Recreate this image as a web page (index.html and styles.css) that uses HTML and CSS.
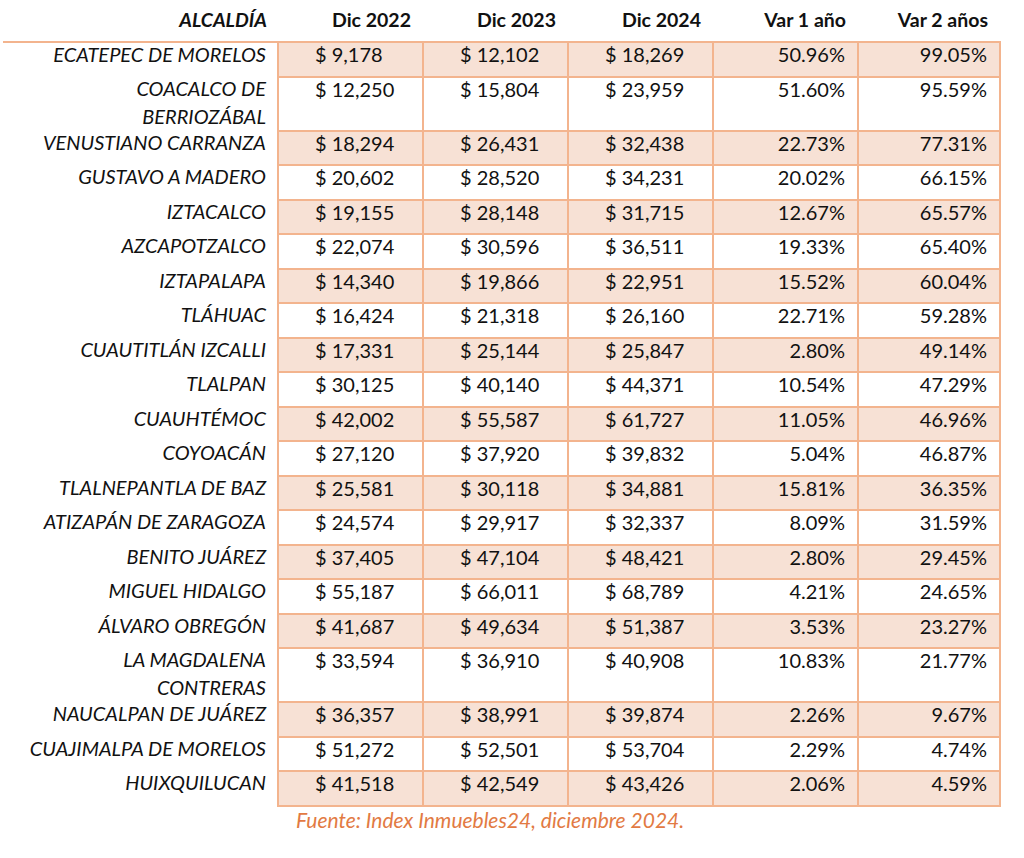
FILE: index.html
```html
<!DOCTYPE html>
<html lang="es">
<head>
<meta charset="utf-8">
<title>Precios por alcaldía</title>
<link rel="stylesheet" href="styles.css">
</head>
<body>
<div class="page">
<table class="data">
  <colgroup>
    <col class="c-name"><col class="c-num"><col class="c-num"><col class="c-num"><col class="c-num"><col class="c-last">
  </colgroup>
  <thead>
    <tr><th class="name">ALCALDÍA</th><th>Dic 2022</th><th>Dic 2023</th><th>Dic 2024</th><th>Var 1 año</th><th>Var 2 años</th></tr>
  </thead>
  <tbody>
    <tr class="shade"><td class="name">ECATEPEC DE MORELOS</td><td class="money">$ 9,178</td><td class="money">$ 12,102</td><td class="money">$ 18,269</td><td class="pct">50.96%</td><td class="pct">99.05%</td></tr>
    <tr class="tall"><td class="name">COACALCO DE<span class="line2">BERRIOZÁBAL</span></td><td class="money">$ 12,250</td><td class="money">$ 15,804</td><td class="money">$ 23,959</td><td class="pct">51.60%</td><td class="pct">95.59%</td></tr>
    <tr class="shade"><td class="name">VENUSTIANO CARRANZA</td><td class="money">$ 18,294</td><td class="money">$ 26,431</td><td class="money">$ 32,438</td><td class="pct">22.73%</td><td class="pct">77.31%</td></tr>
    <tr><td class="name">GUSTAVO A MADERO</td><td class="money">$ 20,602</td><td class="money">$ 28,520</td><td class="money">$ 34,231</td><td class="pct">20.02%</td><td class="pct">66.15%</td></tr>
    <tr class="shade"><td class="name">IZTACALCO</td><td class="money">$ 19,155</td><td class="money">$ 28,148</td><td class="money">$ 31,715</td><td class="pct">12.67%</td><td class="pct">65.57%</td></tr>
    <tr><td class="name">AZCAPOTZALCO</td><td class="money">$ 22,074</td><td class="money">$ 30,596</td><td class="money">$ 36,511</td><td class="pct">19.33%</td><td class="pct">65.40%</td></tr>
    <tr class="shade"><td class="name">IZTAPALAPA</td><td class="money">$ 14,340</td><td class="money">$ 19,866</td><td class="money">$ 22,951</td><td class="pct">15.52%</td><td class="pct">60.04%</td></tr>
    <tr><td class="name">TLÁHUAC</td><td class="money">$ 16,424</td><td class="money">$ 21,318</td><td class="money">$ 26,160</td><td class="pct">22.71%</td><td class="pct">59.28%</td></tr>
    <tr class="shade"><td class="name">CUAUTITLÁN IZCALLI</td><td class="money">$ 17,331</td><td class="money">$ 25,144</td><td class="money">$ 25,847</td><td class="pct">2.80%</td><td class="pct">49.14%</td></tr>
    <tr><td class="name">TLALPAN</td><td class="money">$ 30,125</td><td class="money">$ 40,140</td><td class="money">$ 44,371</td><td class="pct">10.54%</td><td class="pct">47.29%</td></tr>
    <tr class="shade"><td class="name">CUAUHTÉMOC</td><td class="money">$ 42,002</td><td class="money">$ 55,587</td><td class="money">$ 61,727</td><td class="pct">11.05%</td><td class="pct">46.96%</td></tr>
    <tr><td class="name">COYOACÁN</td><td class="money">$ 27,120</td><td class="money">$ 37,920</td><td class="money">$ 39,832</td><td class="pct">5.04%</td><td class="pct">46.87%</td></tr>
    <tr class="shade"><td class="name">TLALNEPANTLA DE BAZ</td><td class="money">$ 25,581</td><td class="money">$ 30,118</td><td class="money">$ 34,881</td><td class="pct">15.81%</td><td class="pct">36.35%</td></tr>
    <tr><td class="name">ATIZAPÁN DE ZARAGOZA</td><td class="money">$ 24,574</td><td class="money">$ 29,917</td><td class="money">$ 32,337</td><td class="pct">8.09%</td><td class="pct">31.59%</td></tr>
    <tr class="shade"><td class="name">BENITO JUÁREZ</td><td class="money">$ 37,405</td><td class="money">$ 47,104</td><td class="money">$ 48,421</td><td class="pct">2.80%</td><td class="pct">29.45%</td></tr>
    <tr><td class="name">MIGUEL HIDALGO</td><td class="money">$ 55,187</td><td class="money">$ 66,011</td><td class="money">$ 68,789</td><td class="pct">4.21%</td><td class="pct">24.65%</td></tr>
    <tr class="shade"><td class="name">ÁLVARO OBREGÓN</td><td class="money">$ 41,687</td><td class="money">$ 49,634</td><td class="money">$ 51,387</td><td class="pct">3.53%</td><td class="pct">23.27%</td></tr>
    <tr class="tall"><td class="name">LA MAGDALENA<span class="line2">CONTRERAS</span></td><td class="money">$ 33,594</td><td class="money">$ 36,910</td><td class="money">$ 40,908</td><td class="pct">10.83%</td><td class="pct">21.77%</td></tr>
    <tr class="shade"><td class="name">NAUCALPAN DE JUÁREZ</td><td class="money">$ 36,357</td><td class="money">$ 38,991</td><td class="money">$ 39,874</td><td class="pct">2.26%</td><td class="pct">9.67%</td></tr>
    <tr><td class="name">CUAJIMALPA DE MORELOS</td><td class="money">$ 51,272</td><td class="money">$ 52,501</td><td class="money">$ 53,704</td><td class="pct">2.29%</td><td class="pct">4.74%</td></tr>
    <tr class="shade"><td class="name">HUIXQUILUCAN</td><td class="money">$ 41,518</td><td class="money">$ 42,549</td><td class="money">$ 43,426</td><td class="pct">2.06%</td><td class="pct">4.59%</td></tr>
  </tbody>
</table>
<p class="source">Fuente: Index Inmuebles24, diciembre 2024.</p>
</div>
</body>
</html>
```
FILE: styles.css
```css
html, body {
  margin: 0;
  padding: 0;
  background: #ffffff;
}

.page {
  padding: 0 0 0 3px;
  font-family: "Lato", "Open Sans", sans-serif;
  color: #111111;
}

.data {
  border-collapse: collapse;
  table-layout: fixed;
  width: 997px;
  font-size: 20px;
}

.c-name { width: 275px; }
.c-num { width: 145px; }
.c-last { width: 142px; }

.data th {
  font-weight: 700;
  font-size: 19.5px;
  text-align: right;
  padding: 7px 12px 8px 0;
  line-height: 26px;
  vertical-align: top;
  border-bottom: 2px solid #f3b48e;
}

.data th.name {
  font-style: italic;
  padding-right: 11px;
}

.data tbody tr {
  height: 34.5px;
}

.data tbody tr.tall {
  height: 54px;
}

.data td {
  line-height: 23px;
  padding: 0;
  vertical-align: top;
  border: 2px solid #f3b48e;
}

.data tbody tr.shade td {
  background: #f7e1d5;
}

.data tbody tr td.name {
  background: #ffffff;
  font-style: italic;
  text-align: right;
  padding-right: 11px;
  border-left: none;
  border-top: none;
  border-bottom: none;
}

.line2 {
  display: block;
  margin-top: 5px;
}

.data td.money {
  text-align: left;
  padding-left: 36px;
}

.data td.pct {
  text-align: right;
  padding-right: 12px;
}

.source {
  margin: 0;
  padding: 0 0 0 293px;
  font-family: "Lato", "Open Sans", sans-serif;
  font-style: italic;
  font-size: 21px;
  line-height: 26px;
  color: #e27a43;
}
```
